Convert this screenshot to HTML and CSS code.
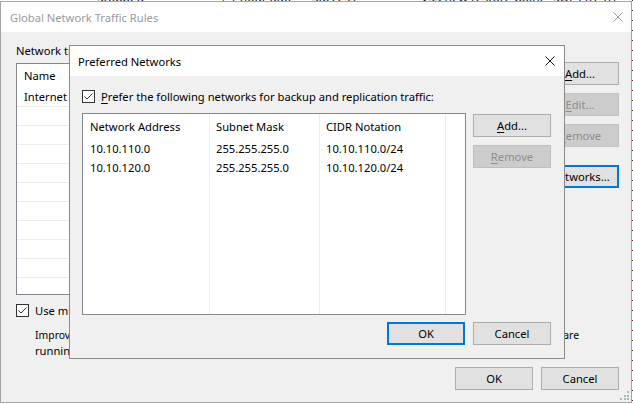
FILE: index.html
```html
<!DOCTYPE html>
<html lang="en">
<head>
<meta charset="utf-8">
<title>Preferred Networks</title>
<link rel="stylesheet" href="styles.css">
</head>
<body>
<div class="bg-row">
  <span class="bg-c1">Stopped</span>
  <span class="bg-c2">| 1 hour ago</span>
  <span class="bg-c3">Success</span>
  <span class="bg-c4">VSS new restore point</span>
  <span class="bg-c5">SQL EXT Tri</span>
</div>
<div class="bg-edge"></div>

<div class="win outer">
  <div class="titlebar">
    <span class="title inactive">Global Network Traffic Rules</span>
    <svg class="close outer-close" width="10" height="10" viewBox="0 0 10 10"><path d="M0.5 0.5L9.5 9.5M9.5 0.5L0.5 9.5" stroke="#9b9b9b" stroke-width="1" fill="none"/></svg>
  </div>
  <div class="outer-body">
    <div class="outer-top">
      <div class="outer-left">
        <div class="label">Network traffic rules:</div>
        <div class="rules-list">
          <div class="rl-head">Name</div>
          <div class="rl-row">Internet</div>
          <div class="rl-row"></div>
          <div class="rl-row"></div>
          <div class="rl-row"></div>
          <div class="rl-row"></div>
          <div class="rl-row"></div>
          <div class="rl-row"></div>
          <div class="rl-row"></div>
          <div class="rl-row"></div>
          <div class="rl-row"></div>
        </div>
      </div>
      <div class="outer-buttons">
        <div class="btn"><span><u>A</u>dd...</span></div>
        <div class="btn disabled"><span><u>E</u>dit...</span></div>
        <div class="btn disabled"><span><u>R</u>emove</span></div>
        <div class="btn focus spaced"><span>Networks...</span></div>
      </div>
    </div>
    <div class="check-row outer-check">
      <svg class="cb" width="13" height="13" viewBox="0 0 13 13"><rect x="0.5" y="0.5" width="12" height="12" fill="#fff" stroke="#333"/><polyline points="2.5,6.5 5,9 10.5,3.5" fill="none" stroke="#333" stroke-width="1"/></svg>
      <span>Use multiple upload streams per job</span>
    </div>
    <div class="desc">
      <div class="desc-l1">Improves performance of off-site backup and replication jobs over slow links when backup proxies are</div>
      <div class="desc-l2">running on multiple hosts.</div>
    </div>
    <div class="btn-row outer-btns">
      <div class="btn"><span>OK</span></div>
      <div class="btn"><span>Cancel</span></div>
    </div>
  </div>
  <svg class="grip" width="10" height="10" viewBox="0 0 10 10">
    <rect x="7" y="0" width="2" height="2" fill="#b4b4b4"/>
    <rect x="4" y="4" width="2" height="2" fill="#b4b4b4"/>
    <rect x="7" y="4" width="2" height="2" fill="#b4b4b4"/>
    <rect x="0" y="7" width="2" height="2" fill="#b4b4b4"/>
    <rect x="4" y="7" width="2" height="2" fill="#b4b4b4"/>
    <rect x="7" y="7" width="2" height="2" fill="#b4b4b4"/>
  </svg>
</div>

<div class="win dlg">
  <div class="titlebar dlg-title">
    <span class="title">Preferred Networks</span>
    <svg class="close dlg-close" width="10" height="10" viewBox="0 0 10 10"><path d="M0.5 0.5L9.5 9.5M9.5 0.5L0.5 9.5" stroke="#111" stroke-width="1" fill="none"/></svg>
  </div>
  <div class="dlg-body">
    <div class="check-row">
      <svg class="cb" width="13" height="13" viewBox="0 0 13 13"><rect x="0.5" y="0.5" width="12" height="12" fill="#fff" stroke="#333"/><polyline points="2.5,6.5 5,9 10.5,3.5" fill="none" stroke="#333" stroke-width="1"/></svg>
      <span><u>P</u>refer the following networks for backup and replication traffic:</span>
    </div>
    <div class="dlg-main">
      <div class="listview">
        <div class="lv-col lv-c1">
          <div class="lv-hd">Network Address</div>
          <div class="lv-cell">10.10.110.0</div>
          <div class="lv-cell">10.10.120.0</div>
        </div>
        <div class="lv-col lv-c2">
          <div class="lv-hd">Subnet Mask</div>
          <div class="lv-cell">255.255.255.0</div>
          <div class="lv-cell">255.255.255.0</div>
        </div>
        <div class="lv-col lv-c3">
          <div class="lv-hd">CIDR Notation</div>
          <div class="lv-cell">10.10.110.0/24</div>
          <div class="lv-cell">10.10.120.0/24</div>
        </div>
        <div class="lv-col lv-c4"></div>
      </div>
      <div class="dlg-side">
        <div class="btn"><span><u>A</u>dd...</span></div>
        <div class="btn disabled"><span><u>R</u>emove</span></div>
      </div>
    </div>
    <div class="btn-row dlg-btns">
      <div class="btn focus"><span>OK</span></div>
      <div class="btn"><span>Cancel</span></div>
    </div>
  </div>
</div>
</body>
</html>
```
FILE: styles.css
```css
* { box-sizing: border-box; }
html, body { margin: 0; padding: 0; }
body {
  width: 633px;
  height: 404px;
  overflow: hidden;
  position: relative;
  background: #fff;
  font-family: "Noto Sans", "Open Sans", sans-serif;
  font-size: 11.2px;
  line-height: 15px;
  color: #000;
}

/* background application peeking out above the window */
.bg-row {
  position: absolute;
  left: 0;
  top: -10px;
  width: 633px;
  height: 15px;
  font-size: 12px;
  color: #1a1a2a;
  white-space: nowrap;
}
.bg-row span { position: absolute; top: 0; }
.bg-c1 { left: 97px; }
.bg-c2 { left: 220px; }
.bg-c3 { left: 312px; }
.bg-c4 { left: 421px; }
.bg-c5 { left: 553px; }
.bg-edge {
  position: absolute;
  left: 632px;
  top: 0;
  width: 1px;
  height: 404px;
  background: repeating-linear-gradient(to bottom, #7a1a1a 0 1px, #fff 1px 10px);
}

/* windows */
.win {
  position: absolute;
  background: #f0f0f0;
  display: flex;
  flex-direction: column;
}
.outer {
  left: 0;
  top: 1px;
  width: 632px;
  height: 402px;
  border: 1px solid #a4a4a4;
}
.titlebar {
  height: 30px;
  flex: none;
  background: #fff;
  display: flex;
  align-items: center;
  justify-content: space-between;
  padding: 0 8px 0 9px;
}
.title { font-size: 11.2px; }
.title.inactive { color: #9a9a9a; }
.close { display: block; }

.outer-body {
  flex: 1;
  display: flex;
  flex-direction: column;
  padding: 11px 12px 12px 15px;
}
.outer-top {
  display: grid;
  grid-template-columns: 1fr 78px;
  column-gap: 10px;
}
.label { height: 15px; margin-bottom: 5px; white-space: nowrap; }
.rules-list {
  height: 232px;
  border: 1px solid #828790;
  background: #fff;
  overflow: hidden;
}
.rl-head {
  height: 24px;
  padding: 4px 0 0 7px;
}
.rl-row {
  height: 19px;
  border-bottom: 1px solid #ececec;
  padding: 1px 0 0 7px;
}
.outer-buttons {
  padding-top: 19px;
  display: flex;
  flex-direction: column;
  gap: 8px;
}
.outer-buttons .spaced { margin-top: 10px; }

.btn {
  width: 78px;
  height: 23px;
  border: 1px solid #adadad;
  background: #e1e1e1;
  display: flex;
  align-items: center;
  justify-content: center;
  white-space: nowrap;
}
.btn.focus { border: 2px solid #0078d7; }
.btn.disabled {
  background: #cccccc;
  border-color: #bfbfbf;
  color: #8d8d8d;
}
.btn u { text-decoration-thickness: 1px; text-underline-offset: 2px; }

.check-row {
  display: flex;
  align-items: center;
  gap: 6px;
  height: 13px;
  white-space: nowrap;
}
.cb { display: block; flex: none; }
.outer-check { margin-top: 9px; }
.check-row u { text-underline-offset: 2px; }

.desc {
  margin: 11px 0 0 19px;
  width: 544px;
  white-space: nowrap;
}
.desc-l1 { text-align: justify; text-align-last: justify; white-space: normal; height: 15px; overflow: hidden; font-size: 10.4px; }
.btn-row {
  display: flex;
  justify-content: flex-end;
  gap: 8px;
}
.outer-btns { margin-top: auto; }

.grip {
  position: absolute;
  right: 1px;
  bottom: 1px;
}

/* Preferred Networks dialog */
.dlg {
  left: 69px;
  top: 45px;
  width: 496px;
  height: 314px;
  border: 1px solid #8a8a8a;
}
.dlg-title { padding: 0 9px 0 8px; }
.dlg-body {
  flex: 1;
  display: flex;
  flex-direction: column;
  padding: 14px 13px 13px 12px;
}
.dlg-main {
  display: flex;
  gap: 7px;
  margin-top: 10px;
  height: 202px;
}
.listview {
  width: 384px;
  height: 202px;
  border: 1px solid #828790;
  background: #fff;
  display: flex;
}
.lv-col {
  display: flex;
  flex-direction: column;
  border-right: 1px solid #eaeef4;
  white-space: nowrap;
}
.lv-c1 { width: 127px; padding-left: 7px; }
.lv-c2 { width: 110px; padding-left: 6px; }
.lv-c3 { width: 126px; padding-left: 6px; }
.lv-c4 { flex: 1; border-right: none; }
.lv-hd { height: 25px; padding-top: 5px; }
.lv-cell { height: 19px; padding-top: 2px; }
.dlg-side {
  padding-top: 1px;
  display: flex;
  flex-direction: column;
  gap: 8px;
}
.dlg-btns { margin-top: 7px; }
```
